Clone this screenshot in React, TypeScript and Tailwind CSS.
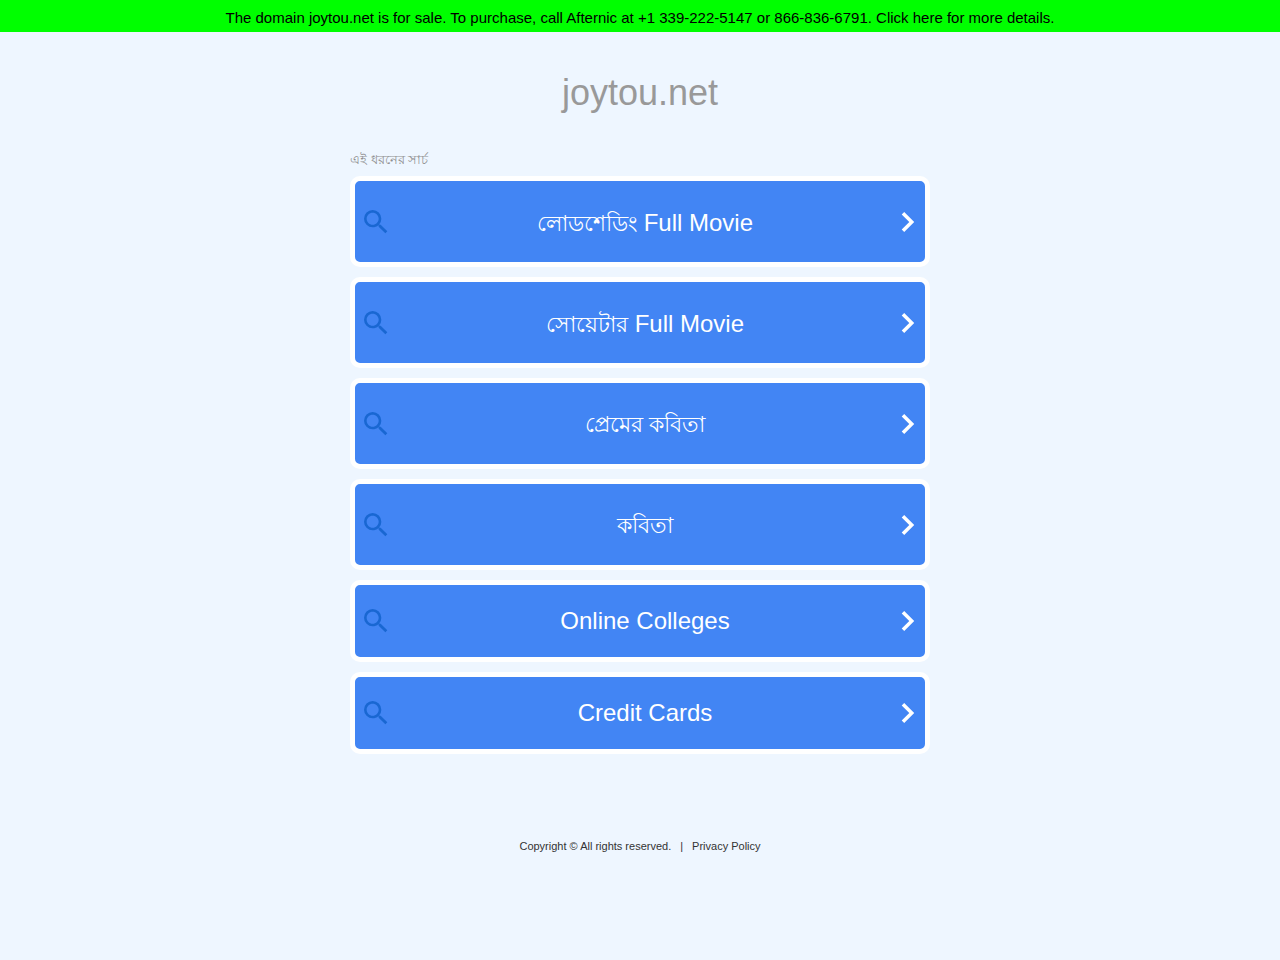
const searches = [
  { bengali: 'লোডশেডিং', latin: ' Full Movie' },
  { bengali: 'সোয়েটার', latin: ' Full Movie' },
  { bengali: 'প্রেমের কবিতা', latin: '' },
  { bengali: 'কবিতা', latin: '' },
  { bengali: '', latin: 'Online Colleges' },
  { bengali: '', latin: 'Credit Cards' },
];

function SearchIcon() {
  return (
    <svg aria-hidden="true" viewBox="0 0 24 24" className="size-8 shrink-0 fill-[#1967d2]">
      <path d="M15.5 14h-.79l-.28-.27A6.471 6.471 0 0 0 16 9.5 6.5 6.5 0 1 0 9.5 16c1.61 0 3.09-.59 4.23-1.57l.27.28v.79l5 4.99L20.49 19l-4.99-5zm-6 0C7.01 14 5 11.99 5 9.5S7.01 5 9.5 5 14 7.01 14 9.5 11.99 14 9.5 14z" />
    </svg>
  );
}

function ChevronIcon() {
  return (
    <svg aria-hidden="true" viewBox="0 0 24 24" className="size-6 shrink-0 fill-white">
      <path d="M5.7 4.4 13.3 12l-7.6 7.6L8.2 22l10-10-10-10z" />
    </svg>
  );
}

export default function App() {
  return (
    <div className="flex min-h-screen flex-col bg-[#eef6ff] font-['Liberation_Sans',Arial,sans-serif]">
      <a href="#details" className="flex min-h-8 items-center justify-center bg-[#00ff00] pt-1 text-center text-[15px] leading-5 text-black">
        The domain joytou.net is for sale. To purchase, call Afternic at +1 339-222-5147 or 866-836-6791. Click here for more details.
      </a>
      <main className="mx-auto w-full max-w-[580px]">
        <h1 className="pt-10 text-center text-4xl leading-[42px] text-[#999999]">joytou.net</h1>
        <h2 lang="bn" className="mt-8 pt-1 pb-1.5 text-[13px] leading-5 text-[#8f8f8f]">এই ধরনের সার্চ</h2>
        <ul className="flex flex-col gap-2.5">
          {searches.map(({ bengali, latin }) => (
            <li key={bengali + latin}>
              <a
                href="#search"
                className={`flex items-center rounded-[10px] border-[5px] border-white bg-[#4285f4] px-[5px] text-2xl text-white ${bengali ? 'h-[91px]' : 'h-[82px]'}`}
              >
                <SearchIcon />
                <span className={`flex-1 pl-0.5 text-center ${bengali && latin ? 'pt-0.5' : ''}`}>
                  {bengali && <span lang="bn" className="text-[22px]">{bengali}</span>}
                  {latin}
                </span>
                <ChevronIcon />
              </a>
            </li>
          ))}
        </ul>
      </main>
      <footer className="mt-[84px] flex justify-center gap-[9px] text-[11px] leading-4 text-[#333333]">
        <span>Copyright © All rights reserved.</span>
        <span>|</span>
        <a href="#privacy">Privacy Policy</a>
      </footer>
    </div>
  );
}
